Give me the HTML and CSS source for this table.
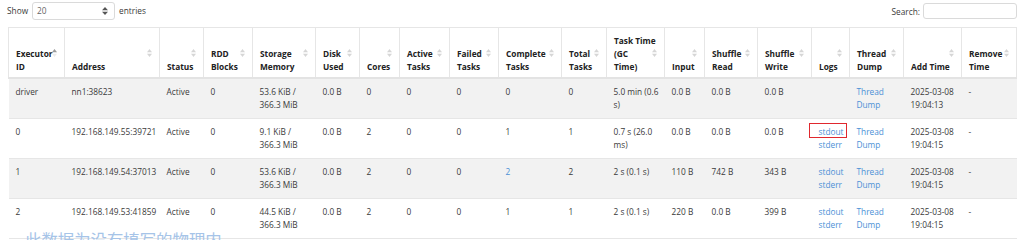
FILE: index.html
```html
<!DOCTYPE html>
<html lang="en">
<head>
<meta charset="utf-8">
<title>Executors</title>
<link rel="stylesheet" href="styles.css">
</head>
<body>
<div class="toolbar">
  <label class="length">Show
    <span class="select">20
      <svg class="select-arrow" width="6" height="8" viewBox="0 0 6 8"><path d="M0 3.2 L3 0 L6 3.2 Z M0 4.8 L3 8 L6 4.8 Z" fill="#555"/></svg>
    </span>
    entries</label>
  <label class="search">Search: <span class="input"></span></label>
</div>

<table class="exec">
  <colgroup>
    <col><col><col><col><col><col><col><col><col><col><col><col><col><col><col><col><col><col><col>
  </colgroup>
  <thead>
    <tr>
      <th class="asc">Executor ID<svg class="sort" width="5" height="8" viewBox="0 0 5 8"><path class="up" d="M0 3.3 L2.5 0 L5 3.3 Z"/><path class="down" d="M0 4.7 L2.5 8 L5 4.7 Z"/></svg></th>
      <th>Address<svg class="sort" width="5" height="8" viewBox="0 0 5 8"><path class="up" d="M0 3.3 L2.5 0 L5 3.3 Z"/><path class="down" d="M0 4.7 L2.5 8 L5 4.7 Z"/></svg></th>
      <th>Status<svg class="sort" width="5" height="8" viewBox="0 0 5 8"><path class="up" d="M0 3.3 L2.5 0 L5 3.3 Z"/><path class="down" d="M0 4.7 L2.5 8 L5 4.7 Z"/></svg></th>
      <th>RDD Blocks<svg class="sort" width="5" height="8" viewBox="0 0 5 8"><path class="up" d="M0 3.3 L2.5 0 L5 3.3 Z"/><path class="down" d="M0 4.7 L2.5 8 L5 4.7 Z"/></svg></th>
      <th>Storage Memory<svg class="sort" width="5" height="8" viewBox="0 0 5 8"><path class="up" d="M0 3.3 L2.5 0 L5 3.3 Z"/><path class="down" d="M0 4.7 L2.5 8 L5 4.7 Z"/></svg></th>
      <th>Disk Used<svg class="sort" width="5" height="8" viewBox="0 0 5 8"><path class="up" d="M0 3.3 L2.5 0 L5 3.3 Z"/><path class="down" d="M0 4.7 L2.5 8 L5 4.7 Z"/></svg></th>
      <th>Cores<svg class="sort" width="5" height="8" viewBox="0 0 5 8"><path class="up" d="M0 3.3 L2.5 0 L5 3.3 Z"/><path class="down" d="M0 4.7 L2.5 8 L5 4.7 Z"/></svg></th>
      <th>Active Tasks<svg class="sort" width="5" height="8" viewBox="0 0 5 8"><path class="up" d="M0 3.3 L2.5 0 L5 3.3 Z"/><path class="down" d="M0 4.7 L2.5 8 L5 4.7 Z"/></svg></th>
      <th>Failed Tasks<svg class="sort" width="5" height="8" viewBox="0 0 5 8"><path class="up" d="M0 3.3 L2.5 0 L5 3.3 Z"/><path class="down" d="M0 4.7 L2.5 8 L5 4.7 Z"/></svg></th>
      <th>Complete Tasks<svg class="sort" width="5" height="8" viewBox="0 0 5 8"><path class="up" d="M0 3.3 L2.5 0 L5 3.3 Z"/><path class="down" d="M0 4.7 L2.5 8 L5 4.7 Z"/></svg></th>
      <th>Total Tasks<svg class="sort" width="5" height="8" viewBox="0 0 5 8"><path class="up" d="M0 3.3 L2.5 0 L5 3.3 Z"/><path class="down" d="M0 4.7 L2.5 8 L5 4.7 Z"/></svg></th>
      <th class="tight">Task&nbsp;Time (GC Time)<svg class="sort" width="5" height="8" viewBox="0 0 5 8"><path class="up" d="M0 3.3 L2.5 0 L5 3.3 Z"/><path class="down" d="M0 4.7 L2.5 8 L5 4.7 Z"/></svg></th>
      <th>Input<svg class="sort" width="5" height="8" viewBox="0 0 5 8"><path class="up" d="M0 3.3 L2.5 0 L5 3.3 Z"/><path class="down" d="M0 4.7 L2.5 8 L5 4.7 Z"/></svg></th>
      <th>Shuffle Read<svg class="sort" width="5" height="8" viewBox="0 0 5 8"><path class="up" d="M0 3.3 L2.5 0 L5 3.3 Z"/><path class="down" d="M0 4.7 L2.5 8 L5 4.7 Z"/></svg></th>
      <th>Shuffle Write<svg class="sort" width="5" height="8" viewBox="0 0 5 8"><path class="up" d="M0 3.3 L2.5 0 L5 3.3 Z"/><path class="down" d="M0 4.7 L2.5 8 L5 4.7 Z"/></svg></th>
      <th>Logs<svg class="sort" width="5" height="8" viewBox="0 0 5 8"><path class="up" d="M0 3.3 L2.5 0 L5 3.3 Z"/><path class="down" d="M0 4.7 L2.5 8 L5 4.7 Z"/></svg></th>
      <th>Thread Dump<svg class="sort" width="5" height="8" viewBox="0 0 5 8"><path class="up" d="M0 3.3 L2.5 0 L5 3.3 Z"/><path class="down" d="M0 4.7 L2.5 8 L5 4.7 Z"/></svg></th>
      <th>Add Time<svg class="sort" width="5" height="8" viewBox="0 0 5 8"><path class="up" d="M0 3.3 L2.5 0 L5 3.3 Z"/><path class="down" d="M0 4.7 L2.5 8 L5 4.7 Z"/></svg></th>
      <th>Remove Time<svg class="sort" width="5" height="8" viewBox="0 0 5 8"><path class="up" d="M0 3.3 L2.5 0 L5 3.3 Z"/><path class="down" d="M0 4.7 L2.5 8 L5 4.7 Z"/></svg></th>
    </tr>
  </thead>
  <tbody>
    <tr>
      <td>driver</td><td>nn1:38623</td><td>Active</td><td>0</td><td>53.6 KiB / 366.3 MiB</td><td>0.0 B</td><td>0</td><td>0</td><td>0</td><td>0</td><td>0</td><td>5.0 min (0.6 s)</td><td>0.0 B</td><td>0.0 B</td><td>0.0 B</td><td></td><td><a href="#">Thread Dump</a></td><td>2025-03-08 19:04:13</td><td>-</td>
    </tr>
    <tr>
      <td>0</td><td>192.168.149.55:39721</td><td>Active</td><td>0</td><td>9.1 KiB / 366.3 MiB</td><td>0.0 B</td><td>2</td><td>0</td><td>0</td><td>1</td><td>1</td><td>0.7 s (26.0 ms)</td><td>0.0 B</td><td>0.0 B</td><td>0.0 B</td><td><span class="marked"><a href="#">stdout</a></span><br><a href="#">stderr</a></td><td><a href="#">Thread Dump</a></td><td>2025-03-08 19:04:15</td><td>-</td>
    </tr>
    <tr>
      <td>1</td><td>192.168.149.54:37013</td><td>Active</td><td>0</td><td>53.6 KiB / 366.3 MiB</td><td>0.0 B</td><td>2</td><td>0</td><td>0</td><td><a href="#">2</a></td><td>2</td><td>2 s (0.1 s)</td><td>110 B</td><td>742 B</td><td>343 B</td><td><a href="#">stdout</a><br><a href="#">stderr</a></td><td><a href="#">Thread Dump</a></td><td>2025-03-08 19:04:15</td><td>-</td>
    </tr>
    <tr>
      <td>2</td><td>192.168.149.53:41859</td><td>Active</td><td>0</td><td>44.5 KiB / 366.3 MiB</td><td>0.0 B</td><td>2</td><td>0</td><td>0</td><td>1</td><td>1</td><td>2 s (0.1 s)</td><td>220 B</td><td>0.0 B</td><td>399 B</td><td><a href="#">stdout</a><br><a href="#">stderr</a></td><td><a href="#">Thread Dump</a></td><td>2025-03-08 19:04:15</td><td>-</td>
    </tr>
  </tbody>
</table>

<div class="watermark">此数据为没有填写的物理内</div>
</body>
</html>
```

FILE: styles.css
```css
html, body {
  margin: 0;
  padding: 0;
  background: #fff;
}
body {
  padding: 0 8px;
  font-family: "Open Sans", "Noto Sans", sans-serif;
  font-size: 8.3px;
  line-height: 13px;
  color: #3a3a3a;
  overflow: hidden;
}

.toolbar {
  display: flex;
  justify-content: space-between;
  align-items: flex-start;
  height: 20px;
  margin-bottom: 7px;
}
.length {
  display: flex;
  align-items: center;
  gap: 4px;
  height: 20px;
  margin-left: -1px;
}
.select {
  display: flex;
  align-items: center;
  justify-content: space-between;
  box-sizing: border-box;
  width: 83px;
  height: 18px;
  margin-top: 1px;
  padding: 0 6px 0 4px;
  border: 1px solid #dadada;
  border-radius: 3px;
  color: #666;
}
.select-arrow { display: block; }
.search {
  display: flex;
  align-items: center;
  gap: 3px;
  height: 16px;
  margin-top: 3px;
  margin-right: -1px;
}
.input {
  display: block;
  box-sizing: border-box;
  width: 94px;
  height: 16px;
  border: 1px solid #dadada;
  border-radius: 3px;
}

.exec {
  width: 1008px;
  table-layout: fixed;
  border-collapse: collapse;
}
.exec col:nth-child(1) { width: 56px; }
.exec col:nth-child(2) { width: 95px; }
.exec col:nth-child(3) { width: 44px; }
.exec col:nth-child(4) { width: 49px; }
.exec col:nth-child(5) { width: 63px; }
.exec col:nth-child(6) { width: 44px; }
.exec col:nth-child(7) { width: 40px; }
.exec col:nth-child(8) { width: 50px; }
.exec col:nth-child(9) { width: 49px; }
.exec col:nth-child(10) { width: 63px; }
.exec col:nth-child(11) { width: 45px; }
.exec col:nth-child(12) { width: 58px; }
.exec col:nth-child(13) { width: 40px; }
.exec col:nth-child(14) { width: 53px; }
.exec col:nth-child(15) { width: 54px; }
.exec col:nth-child(16) { width: 38px; }
.exec col:nth-child(17) { width: 54px; }
.exec col:nth-child(18) { width: 58px; }
.exec col:nth-child(19) { width: 55px; }

.exec th {
  position: relative;
  text-align: left;
  vertical-align: bottom;
  font-weight: 700;
  color: #222;
  padding: 6px 10px 4px 7px;
  border: 1px solid #e6e6e6;
  border-bottom: 2px solid #e3e3e3;
  background: #fff;
}
.exec th.tight {
  padding-right: 13px;
}
.sort {
  position: absolute;
  right: 7px;
  top: 50%;
  margin-top: -4px;
}
.sort path { fill: #d6d6d6; }
.asc .sort .up { fill: #9a9a9a; }
.asc .sort .down { fill: #ececec; }

.exec td {
  vertical-align: top;
  padding: 6px 6px 7px 7px;
  border-top: 1px solid #e6e6e6;
  border-bottom: 1px solid #e6e6e6;
  height: 26px;
}
.exec tbody tr:nth-child(odd) td { background: #f2f2f2; }

a {
  color: #4a8fd6;
  text-decoration: none;
}

.marked {
  position: relative;
}
.marked::after {
  content: "";
  position: absolute;
  left: -10px;
  right: -3px;
  top: -3px;
  bottom: -1px;
  border: 1.5px solid #e0282e;
}

.watermark {
  position: absolute;
  left: 25px;
  top: 231px;
  font-family: "Noto Sans CJK SC", sans-serif;
  font-size: 16.4px;
  line-height: 1;
  color: #a6c4e8;
  white-space: nowrap;
}
```
